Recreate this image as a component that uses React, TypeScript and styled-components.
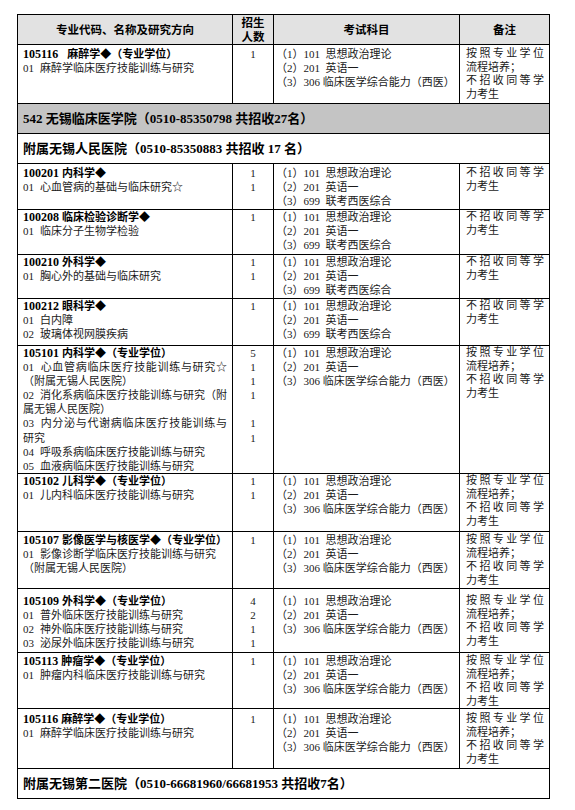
import React from 'react';
import styled, { createGlobalStyle } from 'styled-components';

const Global = createGlobalStyle`
  html, body { margin: 0; padding: 0; background: #ffffff; }
  body {
    font-family: "Liberation Serif", "Noto Sans CJK SC", serif;
    color: #1a1a1a;
  }
`;

const Page = styled.div`
  padding: 14px 0 12px 17px;
`;

const Table = styled.table`
  border-collapse: collapse;
  table-layout: fixed;
  width: 532px;
  font-size: 11px;
`;

const Row = styled.tr<{ $h: number }>`
  height: ${p => p.$h}px;
`;

const HeadCell = styled.th`
  border: 1px solid #000;
  background: #e2e2e2;
  font-family: "Liberation Serif", "Noto Sans CJK SC", serif;
  font-weight: 700;
  font-size: 11.5px;
  line-height: 14px;
  color: #000;
  text-align: center;
  vertical-align: middle;
  padding: 0 2px;
`;

const SectionCell = styled.td<{ $shade?: boolean }>`
  border: 1px solid #000;
  background: ${p => (p.$shade ? '#c4c4c4' : '#ffffff')};
  font-weight: 700;
  font-size: 13px;
  line-height: 16px;
  color: #000;
  vertical-align: middle;
  padding: 0 5px;
  white-space: nowrap;
`;

const Cell = styled.td<{ $center?: boolean; $pt?: number; $pl?: number }>`
  border: 1px solid #000;
  vertical-align: top;
  padding: ${p => p.$pt ?? 1}px 5px 0 ${p => p.$pl ?? 5}px;
  text-align: ${p => (p.$center ? 'center' : 'left')};
  overflow: visible;
`;

const DirLine = styled.div<{ $justify?: boolean }>`
  height: 14.1px;
  line-height: 14.1px;
  text-align: ${p => (p.$justify ? 'justify' : 'left')};
  text-align-last: ${p => (p.$justify ? 'justify' : 'auto')};
  white-space: ${p => (p.$justify ? 'normal' : 'nowrap')};
`;

const CountLine = styled.div`
  height: 14.1px;
  line-height: 14.1px;
  text-align: center;
`;

const ExamLine = styled.div`
  height: 14px;
  line-height: 14px;
  white-space: pre;
`;

const NoteLine = styled.div<{ $justify?: boolean }>`
  height: 13.5px;
  line-height: 13.5px;
  text-align: ${p => (p.$justify ? 'justify' : 'left')};
  text-align-last: ${p => (p.$justify ? 'justify' : 'auto')};
  white-space: ${p => (p.$justify ? 'normal' : 'nowrap')};
`;

const Code = styled.span<{ $wide?: boolean }>`
  font-weight: 700;
  font-size: 12px;
  color: #000;
  margin-right: ${p => (p.$wide ? 9 : 3)}px;
`;

const Name = styled.span`
  font-weight: 700;
  color: #000;
`;

const DirNo = styled.span`
  margin-right: 6px;
`;

type Dir = { no?: string; text: string; justify?: boolean };
type Major = {
  code: string;
  name: string;
  wide?: boolean;
  lines: Dir[];
  counts: string[];
  exam: '306' | '699';
  note: 'full' | 'short';
  h: number;
  pt: number;
};

const exams: Record<'306' | '699', string[]> = {
  '306': ['（1）101  思想政治理论', '（2）201  英语一', '（3）306 临床医学综合能力（西医）'],
  '699': ['（1）101  思想政治理论', '（2）201  英语一', '（3）699  联考西医综合'],
};

const notes: Record<'full' | 'short', { t: string; j?: boolean }[]> = {
  full: [
    { t: '按照专业学位', j: true },
    { t: '流程培养；' },
    { t: '不招收同等学', j: true },
    { t: '力考生' },
  ],
  short: [{ t: '不招收同等学', j: true }, { t: '力考生' }],
};

const first: Major = {
  code: '105116',
  name: '麻醉学◆（专业学位）',
  wide: true,
  lines: [{ no: '01', text: '麻醉学临床医疗技能训练与研究' }],
  counts: ['1'],
  exam: '306',
  note: 'full',
  h: 59,
  pt: 2,
};

const renmin: Major[] = [
  {
    code: '100201',
    name: '内科学◆',
    lines: [{ no: '01', text: '心血管病的基础与临床研究☆' }],
    counts: ['1', '1'],
    exam: '699',
    note: 'short',
    h: 46,
    pt: 2,
  },
  {
    code: '100208',
    name: '临床检验诊断学◆',
    lines: [{ no: '01', text: '临床分子生物学检验' }],
    counts: ['1'],
    exam: '699',
    note: 'short',
    h: 45,
    pt: 0,
  },
  {
    code: '100210',
    name: '外科学◆',
    lines: [{ no: '01', text: '胸心外的基础与临床研究' }],
    counts: ['1', '1'],
    exam: '699',
    note: 'short',
    h: 44,
    pt: 0,
  },
  {
    code: '100212',
    name: '眼科学◆',
    lines: [
      { no: '01', text: '白内障' },
      { no: '02', text: '玻璃体视网膜疾病' },
    ],
    counts: ['1'],
    exam: '699',
    note: 'short',
    h: 47,
    pt: 0,
  },
  {
    code: '105101',
    name: '内科学◆（专业学位）',
    lines: [
      { no: '01', text: '心血管病临床医疗技能训练与研究☆', justify: true },
      { text: '（附属无锡人民医院）' },
      { no: '02', text: '消化系病临床医疗技能训练与研究（附', justify: true },
      { text: '属无锡人民医院）' },
      { no: '03', text: '内分泌与代谢病临床医疗技能训练与', justify: true },
      { text: '研究' },
      { no: '04', text: '呼吸系病临床医疗技能训练与研究' },
      { no: '05', text: '血液病临床医疗技能训练与研究' },
    ],
    counts: ['5', '1', '1', '1', '', '1', '1'],
    exam: '306',
    note: 'full',
    h: 128,
    pt: 0,
  },
  {
    code: '105102',
    name: '儿科学◆（专业学位）',
    lines: [{ no: '01', text: '儿内科临床医疗技能训练与研究' }],
    counts: ['1', '1'],
    exam: '306',
    note: 'full',
    h: 58,
    pt: 0,
  },
  {
    code: '105107',
    name: '影像医学与核医学◆（专业学位）',
    lines: [
      { no: '01', text: '影像诊断学临床医疗技能训练与研究' },
      { text: '（附属无锡人民医院）' },
    ],
    counts: ['1'],
    exam: '306',
    note: 'full',
    h: 57,
    pt: 1,
  },
  {
    code: '105109',
    name: '外科学◆（专业学位）',
    lines: [
      { no: '01', text: '普外临床医疗技能训练与研究' },
      { no: '02', text: '神外临床医疗技能训练与研究' },
      { no: '03', text: '泌尿外临床医疗技能训练与研究' },
    ],
    counts: ['4', '2', '1', '1'],
    exam: '306',
    note: 'full',
    h: 64,
    pt: 5,
  },
  {
    code: '105113',
    name: '肿瘤学◆（专业学位）',
    lines: [{ no: '01', text: '肿瘤内科临床医疗技能训练与研究' }],
    counts: ['1'],
    exam: '306',
    note: 'full',
    h: 56,
    pt: 1,
  },
  {
    code: '105116',
    name: '麻醉学◆（专业学位）',
    lines: [{ no: '01', text: '麻醉学临床医疗技能训练与研究' }],
    counts: ['1'],
    exam: '306',
    note: 'full',
    h: 60,
    pt: 3,
  },
];

const MajorRow: React.FC<{ m: Major }> = ({ m }) => (
  <Row $h={m.h}>
    <Cell $pt={m.pt}>
      <DirLine>
        <Code $wide={m.wide}>{m.code}</Code>
        <Name>{m.name}</Name>
      </DirLine>
      {m.lines.map((d, i) => (
        <DirLine key={i} $justify={d.justify}>
          {d.no && <DirNo>{d.no}</DirNo>}
          {d.text}
        </DirLine>
      ))}
    </Cell>
    <Cell $center $pt={m.pt}>
      {m.counts.map((c, i) => (
        <CountLine key={i}>{c || '\u00a0'}</CountLine>
      ))}
    </Cell>
    <Cell $pt={m.pt} $pl={2}>
      {exams[m.exam].map((e, i) => (
        <ExamLine key={i}>{e}</ExamLine>
      ))}
    </Cell>
    <Cell $pt={m.pt} $pl={6}>
      {notes[m.note].map((n, i) => (
        <NoteLine key={i} $justify={n.j}>
          {n.t}
        </NoteLine>
      ))}
    </Cell>
  </Row>
);

export default function App() {
  return (
    <>
      <Global />
      <Page>
        <Table>
          <colgroup>
            <col style={{ width: 215 }} />
            <col style={{ width: 41 }} />
            <col style={{ width: 186 }} />
            <col style={{ width: 90 }} />
          </colgroup>
          <tbody>
            <Row $h={30}>
              <HeadCell>专业代码、名称及研究方向</HeadCell>
              <HeadCell>
                招生
                <br />
                人数
              </HeadCell>
              <HeadCell>考试科目</HeadCell>
              <HeadCell>备注</HeadCell>
            </Row>
            <MajorRow m={first} />
            <Row $h={30}>
              <SectionCell colSpan={4} $shade>
                542 无锡临床医学院（0510-85350798 共招收27名）
              </SectionCell>
            </Row>
            <Row $h={30}>
              <SectionCell colSpan={4}>附属无锡人民医院（0510-85350883 共招收 17 名）</SectionCell>
            </Row>
            {renmin.map(m => (
              <MajorRow key={m.code} m={m} />
            ))}
            <Row $h={30}>
              <SectionCell colSpan={4}>附属无锡第二医院（0510-66681960/66681953 共招收7名）</SectionCell>
            </Row>
          </tbody>
        </Table>
      </Page>
    </>
  );
}
